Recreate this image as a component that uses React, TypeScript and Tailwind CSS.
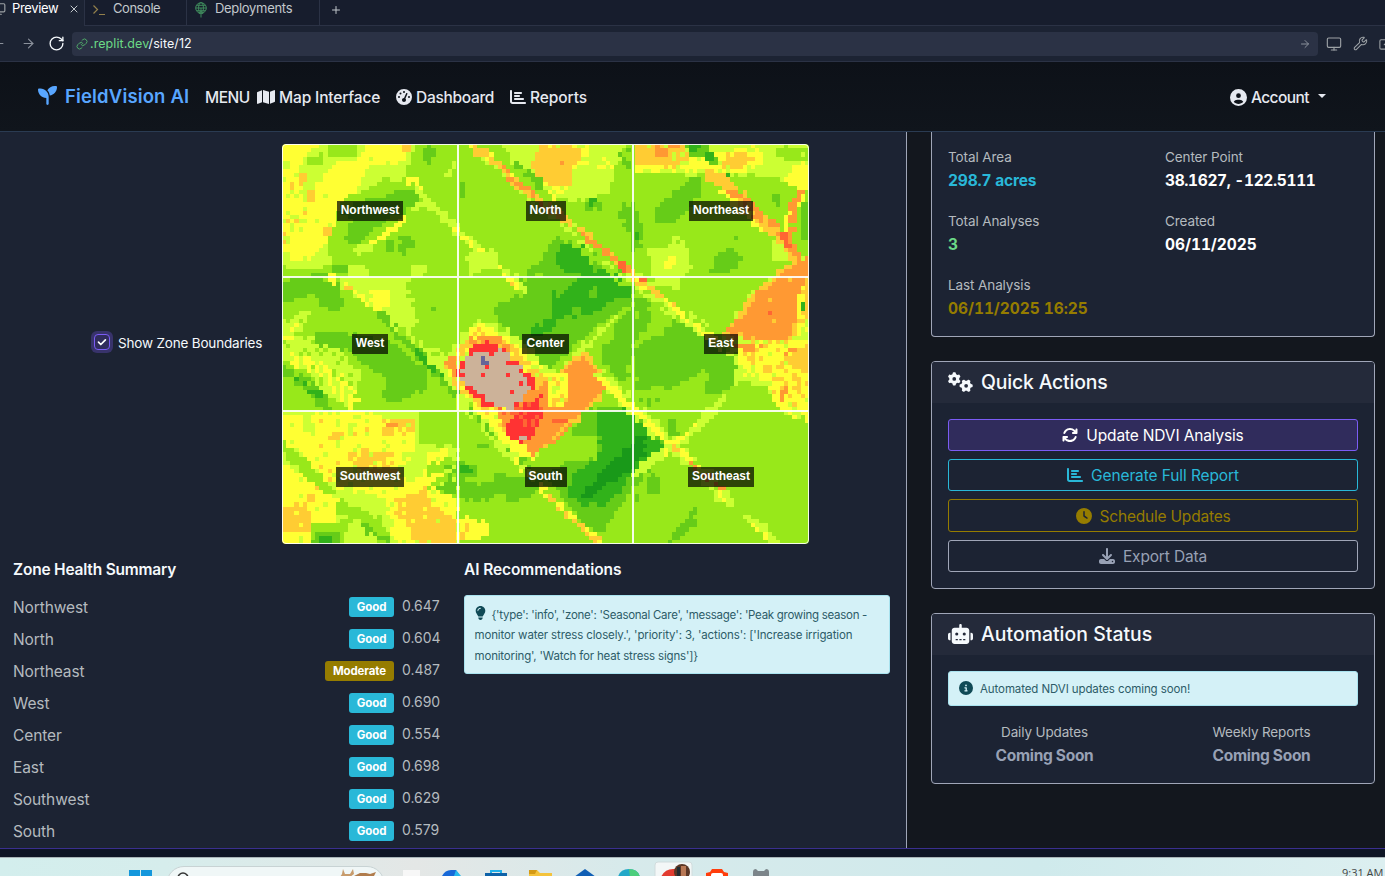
import React from 'react';
import {
  FaSeedling, FaMap, FaGaugeHigh, FaChartBar, FaCircleUser, FaGears, FaArrowsRotate,
  FaClock, FaDownload, FaRobot, FaCircleInfo, FaLightbulb,
} from 'react-icons/fa6';
import { X, Plus, ArrowLeft, ArrowRight, RotateCw, Monitor, Wrench, ExternalLink, Link } from 'lucide-react';

/* ---------- NDVI raster: shapes sampled onto a coarse grid ---------- */
const COLS = 127;
const ROWS = 96;
const W = 1581;
const H = 1200;
const PALETTE: Record<string, string> = {
  a: '#98e81a', b: '#66cc18', c: '#31b21a', d: '#199919', e: '#ccff33', f: '#ffff33',
  g: '#ffcc33', h: '#ff9933', i: '#ff6633', j: '#ff3333', k: '#ccb299', l: '#666699',
};

type Shape = { c: string; p: number[]; d?: number; w?: number; s?: number };

// p = flat x,y list; w = stroke width (polyline), d = fill density, s = speckle block size
const SHAPES: Shape[] = [
  // northwest
  { c: 'e', p: [0, 0, 400, 0, 370, 100, 300, 130, 240, 150, 200, 260, 145, 340, 140, 372, 0, 372] },
  { c: 'f', p: [0, 0, 130, 0, 75, 30, 40, 90, 60, 150, 80, 250, 110, 345, 0, 350], d: 0.9, s: 2 },
  { c: 'f', p: [265, 0, 380, 0, 370, 50, 265, 65, 235, 120, 205, 170, 170, 250, 110, 330, 30, 330, 20, 270, 100, 130, 160, 60, 222, 38], d: 0.97 },
  { c: 'e', p: [0, 100, 70, 120, 70, 250, 0, 330], d: 0.22 },
  { c: 'a', p: [135, 0, 222, 0, 222, 36, 135, 36] },
  { c: 'a', p: [70, 35, 122, 30, 120, 58, 72, 58] },
  { c: 'a', p: [180, 170, 235, 140, 320, 100, 385, 130, 340, 180, 240, 240, 180, 290, 150, 350, 130, 330] },
  { c: 'g', p: [0, 90, 120, 60, 110, 250, 0, 330], d: 0.08 },
  { c: 'g', p: [70, 135, 95, 135, 95, 172, 70, 172] },
  { c: 'g', p: [45, 82, 72, 82, 72, 108, 45, 108] },
  { c: 'g', p: [120, 247, 146, 247, 146, 273, 120, 273] },
  { c: 'g', p: [365, 0, 390, 0, 380, 22, 365, 22] },
  { c: 'b', p: [230, 170, 330, 150, 360, 135, 408, 138, 410, 165, 370, 205, 330, 220, 280, 260, 240, 292, 200, 308, 195, 270, 210, 230, 180, 210] },
  { c: 'b', p: [420, 10, 475, 10, 455, 35, 440, 60, 422, 50] },
  { c: 'b', p: [305, 285, 332, 285, 332, 322, 305, 322] },
  { c: 'b', p: [358, 272, 382, 272, 405, 305, 380, 318, 365, 335, 345, 325, 345, 308, 360, 300] },
  { c: 'b', p: [155, 360, 195, 360, 195, 385, 155, 385] },
  { c: 'b', p: [93, 383, 160, 383, 160, 396, 93, 396] },
  { c: 'f', p: [262, 305, 300, 275, 345, 245, 370, 215], w: 16 },
  { c: 'e', p: [232, 320, 265, 305], w: 26 },
  { c: 'f', p: [385, 108, 415, 125], w: 22 },
  { c: 'e', p: [395, 128, 430, 165, 395, 195], w: 14 },
  { c: 'e', p: [430, 165, 465, 195, 520, 250, 560, 290, 620, 335, 670, 390, 715, 425, 792, 500], w: 22 },
  { c: 'f', p: [520, 255, 580, 310, 620, 340, 670, 395, 710, 430], w: 13, d: 0.8 },
  { c: 'g', p: [650, 370, 700, 425], w: 13, d: 0.6 },
  { c: 'e', p: [485, 100, 505, 85, 520, 55], w: 16 },
  { c: 'e', p: [392, 365, 440, 365, 428, 396, 392, 396], d: 0.8 },
  { c: 'e', p: [205, 362, 250, 362, 262, 396, 205, 396] },
  { c: 'e', p: [555, 325, 640, 315, 645, 380, 610, 375, 555, 395] },
  { c: 'b', p: [532, 110, 545, 110, 545, 160, 532, 160] },
  { c: 'b', p: [735, 380, 792, 340, 792, 390, 735, 396] },
  // north
  { c: 'e', p: [660, 0, 1030, 0, 1010, 50, 990, 110, 985, 145, 880, 175, 800, 150, 750, 85, 690, 50] },
  { c: 'f', p: [792, 0, 930, 10, 910, 55, 875, 85, 865, 130, 815, 165, 790, 150, 750, 60], d: 0.8 },
  { c: 'g', p: [770, 10, 850, 0, 895, 22, 900, 45, 875, 55, 870, 120, 800, 125, 760, 85, 745, 60, 760, 30] },
  { c: 'f', p: [900, 60, 1000, 30, 1000, 80, 920, 70], d: 0.6 },
  { c: 'h', p: [832, 50, 846, 50, 846, 63, 832, 63] },
  { c: 'b', p: [1010, 0, 1040, 0, 1046, 90, 1025, 90, 1020, 30], d: 0.75 },
  { c: 'b', p: [690, 55, 780, 120], w: 24, d: 0.6 },
  { c: 'c', p: [920, 165, 945, 165, 945, 185, 920, 185] },
  { c: 'b', p: [900, 180, 960, 175, 960, 200, 930, 205, 910, 195], d: 0.6 },
  { c: 'b', p: [1020, 180, 1050, 180, 1085, 240, 1080, 300, 1050, 330, 1030, 230, 1005, 220] },
  { c: 'c', p: [1060, 265, 1072, 265, 1072, 290, 1060, 290] },
  // central green fields
  { c: 'b', p: [792, 310, 830, 270, 880, 280, 930, 320, 1000, 370, 1055, 405, 1055, 470, 1000, 510, 960, 540, 890, 590, 850, 640, 792, 680, 720, 610, 640, 510, 650, 480, 705, 455, 735, 470, 720, 410, 792, 395] },
  { c: 'c', p: [820, 330, 845, 293, 900, 300, 910, 345, 940, 380, 975, 370, 1045, 400, 1050, 450, 980, 480, 930, 512, 830, 520, 800, 565, 750, 575, 745, 555, 792, 530, 815, 500, 805, 450, 870, 420, 895, 395, 860, 390, 825, 360] },
  { c: 'b', p: [815, 440, 845, 420, 840, 455, 818, 465] },
  { c: 'b', p: [870, 490, 895, 490, 890, 515, 870, 515] },
  { c: 'b', p: [920, 435, 940, 430, 940, 460, 920, 455] },
  { c: 'b', p: [1000, 540, 1060, 480, 1060, 600, 985, 600] },
  { c: 'b', p: [960, 600, 1050, 600, 1050, 640, 1030, 720, 990, 690, 960, 650] },
  { c: 'e', p: [920, 600, 960, 560, 1000, 520], w: 16, d: 0.8 },
  { c: 'e', p: [860, 660, 920, 595], w: 22, d: 0.8 },
  // highway through the north zone
  { c: 'a', p: [800, 225, 880, 280, 960, 345, 1040, 400], w: 50, d: 0.8 },
  { c: 'e', p: [560, 0, 640, 65, 710, 130, 790, 195, 850, 240, 900, 280, 960, 330, 1010, 370, 1060, 405], w: 36, d: 0.45 },
  { c: 'f', p: [575, 0, 640, 55, 710, 120, 790, 185, 850, 228], w: 28, d: 0.5 },
  { c: 'g', p: [585, 15, 640, 55, 710, 120, 790, 180, 850, 225, 900, 265, 960, 315, 1010, 355, 1060, 400], w: 23, d: 0.85 },
  { c: 'h', p: [620, 45, 660, 75, 710, 120, 790, 175], w: 14, d: 0.5 },
  { c: 'h', p: [900, 265, 960, 315, 1010, 355, 1060, 395], w: 20, d: 0.75 },
  { c: 'i', p: [1005, 350, 1020, 345, 1045, 385, 1050, 395, 1030, 390, 1010, 370] },
  // northeast
  { c: 'e', p: [1055, 0, 1581, 0, 1581, 110, 1510, 110, 1450, 95, 1060, 88] },
  { c: 'f', p: [1060, 55, 1200, 60, 1215, 30, 1440, 5, 1440, 60, 1380, 85, 1290, 80, 1060, 85], d: 0.8 },
  { c: 'g', p: [1060, 0, 1205, 0, 1215, 50, 1180, 70, 1120, 65, 1060, 65], d: 0.95 },
  { c: 'h', p: [1120, 2, 1190, 2, 1190, 12, 1158, 12, 1158, 38, 1120, 38] },
  { c: 'b', p: [1208, 0, 1290, 0, 1290, 30, 1310, 60, 1280, 60, 1250, 30, 1215, 40] },
  { c: 'c', p: [1220, 0, 1260, 0, 1245, 28, 1225, 28] },
  { c: 'c', p: [1270, 28, 1300, 28, 1300, 52, 1275, 52] },
  { c: 'g', p: [1320, 42, 1345, 30, 1420, 30, 1405, 55, 1370, 75, 1325, 70] },
  { c: 'a', p: [1480, 10, 1581, 10, 1581, 50, 1535, 55, 1480, 40], d: 0.85 },
  { c: 'f', p: [1540, 60, 1581, 60, 1581, 140, 1545, 130, 1510, 110] },
  { c: 'b', p: [1160, 160, 1215, 110, 1240, 90, 1260, 115, 1260, 150, 1210, 205, 1170, 235, 1120, 240, 1120, 185] },
  { c: 'c', p: [1333, 88, 1346, 88, 1346, 112, 1333, 112] },
  { c: 'f', p: [1270, 80, 1310, 110, 1345, 150, 1400, 210, 1500, 280, 1540, 330], w: 38, d: 0.8 },
  { c: 'g', p: [1290, 95, 1345, 130, 1400, 190, 1450, 235, 1510, 290, 1550, 370], w: 34 },
  { c: 'h', p: [1350, 145, 1390, 170, 1420, 205, 1480, 250, 1520, 290, 1560, 350], w: 24, d: 0.9 },
  { c: 'i', p: [1500, 270, 1520, 300], w: 20 },
  { c: 'f', p: [1570, 120, 1535, 190, 1520, 250], w: 32, d: 0.7 },
  { c: 'h', p: [1560, 140, 1535, 180, 1528, 290], w: 19 },
  { c: 'b', p: [1555, 180, 1581, 175, 1581, 290, 1555, 280, 1565, 230] },
  { c: 'e', p: [1465, 290, 1505, 300, 1520, 350, 1475, 355] },
  { c: 'b', p: [1470, 155, 1498, 155, 1498, 190, 1480, 190] },
  { c: 'e', p: [1095, 310, 1220, 305, 1232, 370, 1195, 400, 1190, 440, 1140, 430, 1105, 380] },
  { c: 'f', p: [1140, 335, 1190, 330, 1170, 370, 1140, 370], d: 0.7 },
  { c: 'e', p: [1165, 280, 1210, 280, 1210, 310, 1170, 305], d: 0.5 },
  { c: 'b', p: [1285, 345, 1310, 325, 1350, 318, 1382, 345, 1350, 385, 1290, 385] },
  { c: 'b', p: [1365, 265, 1372, 265, 1372, 290, 1362, 290] },
  // east orchard
  { c: 'e', p: [1581, 330, 1460, 400, 1410, 450, 1320, 570, 1340, 600, 1581, 600] },
  { c: 'g', p: [1581, 340, 1500, 370, 1465, 400, 1420, 450, 1380, 495, 1345, 535, 1325, 565, 1340, 600, 1530, 600, 1581, 520] },
  { c: 'h', p: [1581, 338, 1520, 368, 1480, 405, 1425, 450, 1385, 500, 1350, 545, 1330, 565, 1350, 580, 1500, 590, 1535, 550, 1545, 450, 1581, 400], d: 0.98 },
  { c: 'f', p: [1545, 430, 1575, 430, 1560, 530, 1581, 560, 1540, 570], d: 0.6 },
  { c: 'i', p: [1458, 505, 1470, 505, 1470, 517, 1458, 517] },
  { c: 'c', p: [1557, 480, 1570, 480, 1570, 495, 1557, 495] },
  { c: 'b', p: [1060, 460, 1090, 455, 1108, 500, 1105, 550, 1060, 590] },
  { c: 'b', p: [1125, 580, 1175, 535, 1230, 545, 1300, 595, 1345, 630, 1390, 680, 1380, 700, 1340, 735, 1290, 760, 1265, 735, 1200, 735, 1170, 728, 1120, 728, 1060, 750, 1060, 620, 1090, 590] },
  { c: 'a', p: [1190, 720, 1230, 700, 1270, 680, 1290, 685, 1270, 735, 1190, 740] },
  { c: 'e', p: [1060, 400, 1100, 440, 1150, 480, 1240, 540, 1310, 590, 1370, 630], w: 44, d: 0.55 },
  { c: 'f', p: [1060, 405, 1110, 440, 1180, 490, 1250, 550, 1300, 590], w: 20, d: 0.75 },
  { c: 'g', p: [1060, 400, 1110, 435, 1170, 480], w: 15, d: 0.8 },
  { c: 'i', p: [1072, 402, 1092, 402, 1092, 416, 1072, 416] },
  { c: 'e', p: [1360, 585, 1581, 585, 1581, 820, 1500, 810, 1460, 750, 1400, 710, 1360, 730] },
  { c: 'a', p: [1370, 735, 1450, 725, 1500, 800, 1500, 820, 1350, 800] },
  { c: 'f', p: [1370, 600, 1581, 590, 1581, 835, 1530, 820, 1470, 770, 1460, 715, 1390, 690, 1370, 640], d: 0.9 },
  { c: 'g', p: [1360, 588, 1581, 588, 1581, 760, 1540, 780, 1470, 770, 1460, 700, 1400, 660], d: 0.3 },
  { c: 'g', p: [1510, 645, 1581, 600, 1581, 690, 1530, 675] },
  { c: 'h', p: [1350, 600, 1440, 600, 1430, 640, 1410, 635], d: 0.5 },
  { c: 'h', p: [1495, 635, 1550, 600, 1545, 625], d: 0.8 },
  { c: 'h', p: [1468, 720, 1510, 720, 1540, 780, 1500, 770], d: 0.4 },
  // west
  { c: 'b', p: [0, 405, 165, 405, 180, 440, 180, 490, 150, 500, 120, 480, 95, 455, 75, 450, 40, 472, 10, 470, 0, 465] },
  { c: 'e', p: [200, 400, 380, 400, 375, 450, 405, 500, 400, 550, 330, 560, 300, 500, 240, 465, 150, 405] },
  { c: 'f', p: [150, 400, 200, 430, 250, 470, 300, 500], w: 22, d: 0.8 },
  { c: 'f', p: [265, 440, 320, 438, 320, 485, 285, 500] },
  { c: 'g', p: [190, 425, 207, 425, 207, 440, 190, 440] },
  { c: 'e', p: [0, 530, 60, 500, 90, 500, 50, 570, 150, 600, 240, 690, 210, 790, 130, 760, 90, 690, 0, 640], d: 0.85 },
  { c: 'f', p: [0, 550, 40, 530, 50, 570, 30, 600, 0, 610], d: 0.6 },
  { c: 'f', p: [10, 640, 60, 620, 120, 660, 180, 690, 230, 750, 220, 800, 180, 780, 130, 700, 40, 670], d: 0.5 },
  { c: 'b', p: [95, 565, 190, 562, 300, 590, 350, 608, 410, 655, 445, 695, 440, 740, 400, 748, 380, 765, 320, 780, 305, 760, 310, 710, 290, 690, 250, 668, 215, 635, 190, 622, 100, 600] },
  { c: 'a', p: [0, 690, 50, 690, 80, 790, 0, 790] },
  { c: 'b', p: [0, 680, 50, 705, 100, 740, 130, 790], w: 34, d: 0.85 },
  { c: 'c', p: [55, 715, 115, 755], w: 18, d: 0.8 },
  { c: 'e', p: [340, 540, 400, 600, 450, 640, 500, 690, 540, 740], w: 34, d: 0.55 },
  { c: 'e', p: [400, 630, 430, 610, 520, 640, 520, 760, 470, 690], d: 0.5 },
  { c: 'b', p: [285, 500, 330, 550, 390, 610, 440, 660, 490, 715, 540, 765, 610, 830, 660, 880, 740, 960], w: 22, d: 0.85 },
  { c: 'c', p: [400, 620, 470, 690], w: 16, d: 0.4 },
  { c: 'b', p: [445, 487, 455, 487, 455, 500, 445, 500] },
  // processing yard
  { c: 'e', p: [470, 660, 540, 570, 600, 530, 680, 560, 840, 700, 860, 770, 830, 830, 760, 945, 690, 940, 620, 850, 530, 770, 480, 700], d: 0.85 },
  { c: 'f', p: [480, 660, 535, 620, 560, 560, 600, 538, 680, 580, 760, 650, 830, 700, 850, 760, 820, 800, 750, 945, 690, 920, 610, 830, 530, 740], d: 0.85 },
  { c: 'g', p: [490, 660, 540, 600, 580, 560, 650, 565, 700, 610, 760, 680, 830, 730, 850, 780, 740, 900, 690, 880, 600, 790, 530, 740], d: 0.7 },
  { c: 'h', p: [485, 655, 520, 630, 520, 700], d: 0.8 },
  { c: 'h', p: [560, 570, 650, 575, 700, 620, 560, 615], d: 0.5 },
  { c: 'j', p: [530, 665, 565, 618, 590, 592, 650, 594, 685, 640, 725, 680, 760, 710, 738, 765, 700, 803, 600, 782, 560, 748, 530, 700] },
  { c: 'k', p: [560, 628, 605, 622, 625, 632, 650, 622, 682, 628, 692, 652, 720, 680, 722, 702, 748, 722, 738, 748, 705, 775, 692, 795, 655, 799, 618, 772, 602, 748, 570, 736, 543, 710, 534, 682, 545, 655] },
  { c: 'j', p: [595, 690, 608, 690, 608, 702, 595, 702] },
  { c: 'j', p: [605, 665, 618, 665, 618, 677, 605, 677] },
  { c: 'j', p: [668, 690, 680, 690, 680, 702, 668, 702] },
  { c: 'j', p: [706, 715, 720, 715, 720, 727, 706, 727] },
  { c: 'j', p: [668, 650, 702, 650, 702, 664, 668, 664] },
  { c: 'j', p: [681, 740, 695, 740, 695, 752, 681, 752] },
  { c: 'h', p: [740, 740, 800, 720, 870, 780, 870, 850, 800, 910, 750, 930, 720, 880, 680, 850, 620, 810, 700, 790] },
  { c: 'j', p: [730, 775, 792, 745, 780, 810, 765, 850, 735, 895, 700, 890, 680, 870, 672, 840, 710, 810] },
  { c: 'i', p: [640, 795, 800, 780, 780, 830, 740, 850, 700, 830], d: 0.35 },
  { c: 'k', p: [706, 870, 730, 870, 730, 890, 706, 890] },
  { c: 'i', p: [792, 740, 808, 740, 808, 780, 792, 780] },
  { c: 'l', p: [592, 640, 604, 640, 604, 664, 592, 664] },
  { c: 'l', p: [604, 652, 617, 652, 617, 664, 604, 664] },
  { c: 'g', p: [830, 690, 890, 630, 910, 620, 975, 700, 965, 750, 900, 820, 830, 870, 790, 915, 790, 700] },
  { c: 'h', p: [800, 715, 850, 690, 870, 655, 905, 640, 950, 685, 968, 730, 930, 770, 900, 805, 850, 840, 810, 885, 780, 910, 780, 720] },
  { c: 'g', p: [795, 690, 855, 690, 855, 780, 800, 785] },
  { c: 'f', p: [795, 690, 860, 690, 855, 780, 800, 785], d: 0.65 },
  { c: 'e', p: [800, 695, 850, 700, 845, 770, 810, 775], d: 0.2 },
  { c: 'i', p: [820, 820, 855, 820, 855, 842, 810, 842] },
  // south
  { c: 'b', p: [900, 800, 960, 785, 1060, 795, 1170, 905, 1100, 980, 1060, 1020, 1000, 1110, 960, 1155, 910, 1150, 860, 1080, 800, 1010, 830, 955, 950, 945, 870, 870] },
  { c: 'c', p: [945, 798, 1030, 795, 1080, 840, 1120, 870, 1155, 910, 1120, 940, 1060, 980, 1010, 1050, 960, 1085, 890, 1080, 865, 1050, 880, 980, 930, 960, 955, 925] },
  { c: 'd', p: [1055, 900, 1090, 860, 1090, 930, 1050, 980, 1000, 1010, 950, 1030, 940, 1065, 890, 1065, 900, 1040, 940, 1005, 990, 945] },
  { c: 'a', p: [860, 870, 940, 870, 950, 925, 850, 940] },
  { c: 'e', p: [960, 700, 1050, 790, 1110, 850, 1170, 905, 1240, 960, 1310, 1040], w: 40, d: 0.7 },
  { c: 'f', p: [960, 700, 1030, 770, 1100, 840, 1170, 900, 1240, 965], w: 17, d: 0.85 },
  { c: 'e', p: [1060, 990, 1110, 950, 1200, 890, 1260, 830, 1320, 770], w: 26 },
  { c: 'f', p: [1150, 930, 1210, 870, 1260, 830], w: 13, d: 0.6 },
  { c: 'g', p: [1168, 895, 1195, 895, 1195, 925, 1168, 925], d: 0.8 },
  { c: 'h', p: [1225, 960, 1320, 1035], w: 15, d: 0.7 },
  { c: 'e', p: [1295, 1035, 1340, 1040, 1365, 1085, 1290, 1075] },
  { c: 'f', p: [1305, 1036, 1325, 1070], w: 13 },
  { c: 'e', p: [1395, 1125, 1440, 1150, 1480, 1195], w: 24 },
  { c: 'f', p: [1405, 1140, 1460, 1185], w: 12, d: 0.7 },
  { c: 'b', p: [1155, 1195, 1180, 1155, 1215, 1125, 1220, 1095, 1242, 1095, 1240, 1140, 1200, 1180, 1170, 1197] },
  { c: 'b', p: [1160, 830, 1182, 830, 1190, 870, 1155, 880] },
  { c: 'b', p: [1060, 1000, 1130, 990, 1130, 1110, 1060, 1110], d: 0.22, s: 2 },
  { c: 'b', p: [1070, 765, 1130, 765, 1110, 790], d: 0.6 },
  { c: 'f', p: [700, 950, 792, 1045, 840, 1095, 890, 1140, 960, 1195], w: 20, d: 0.85 },
  { c: 'g', p: [792, 1050, 840, 1100, 890, 1145, 960, 1195], w: 12, d: 0.7 },
  { c: 'e', p: [530, 780, 600, 850, 660, 920, 740, 985], w: 14, d: 0.7 },
  { c: 'b', p: [530, 1030, 570, 1015, 625, 1015, 640, 995, 780, 1005, 765, 1045, 700, 1070, 680, 1085, 665, 1045, 625, 1070, 560, 1068, 530, 1055] },
  { c: 'b', p: [575, 895, 630, 895, 625, 915, 590, 915] },
  // southwest
  { c: 'e', p: [0, 800, 410, 800, 415, 900, 530, 910, 530, 1200, 0, 1200] },
  { c: 'f', p: [0, 820, 60, 810, 60, 850, 150, 880, 120, 920, 160, 1000, 200, 1050, 120, 1000, 50, 920, 0, 890], d: 0.95 },
  { c: 'f', p: [90, 805, 260, 800, 400, 860, 400, 920, 340, 1000, 300, 1060, 220, 1040, 130, 970, 130, 880, 80, 830], d: 0.86 },
  { c: 'f', p: [440, 930, 500, 920, 480, 1000, 440, 1040, 410, 1010], d: 0.85 },
  { c: 'f', p: [0, 960, 120, 1030, 200, 1080, 160, 1130, 90, 1195, 0, 1195], d: 0.96 },
  { c: 'f', p: [300, 1010, 450, 1000, 525, 1070, 525, 1195, 340, 1195], d: 0.97 },
  { c: 'a', p: [0, 905, 60, 960, 120, 1020, 140, 1040], w: 32, d: 0.97 },
  { c: 'a', p: [180, 1090, 230, 1110, 280, 1140, 310, 1185], w: 38, d: 0.97 },
  { c: 'a', p: [410, 800, 525, 800, 525, 840, 460, 880, 420, 880] },
  { c: 'a', p: [440, 960, 530, 930, 530, 1060, 440, 1040], d: 0.7 },
  { c: 'a', p: [90, 1135, 210, 1130, 180, 1195, 90, 1195] },
  { c: 'g', p: [330, 1070, 400, 1045, 430, 1030, 450, 1080, 520, 1120, 525, 1195, 400, 1195, 380, 1140, 345, 1110], d: 0.95 },
  { c: 'g', p: [0, 1090, 50, 1078, 88, 1095, 85, 1160, 0, 1165], d: 0.92 },
  { c: 'g', p: [200, 905, 230, 920, 330, 925, 350, 985, 290, 1000, 210, 965], d: 0.8 },
  { c: 'g', p: [300, 830, 400, 830, 390, 870, 300, 870], d: 0.75 },
  { c: 'g', p: [80, 1045, 105, 1045, 105, 1070, 80, 1070] },
  { c: 'g', p: [150, 860, 175, 860, 175, 890, 150, 890] },
  { c: 'g', p: [100, 820, 280, 830, 220, 920, 80, 1080], d: 0.07 },
  { c: 'h', p: [315, 840, 345, 840, 345, 850, 315, 850] },
  { c: 'b', p: [100, 1165, 165, 1160, 180, 1195, 90, 1195] },
  { c: 'c', p: [110, 1178, 145, 1178, 145, 1197, 110, 1197] },
  { c: 'b', p: [240, 1135, 320, 1180, 320, 1195, 250, 1170], d: 0.8 },
  { c: 'b', p: [490, 965, 575, 950, 580, 990, 545, 1010, 520, 1050, 460, 1030, 500, 1000], d: 0.9 },
  { c: 'c', p: [530, 965, 565, 968, 570, 990, 530, 990] },
  { c: 'f', p: [530, 1120, 570, 1125, 625, 1130, 620, 1165, 580, 1195, 530, 1195] },
  { c: 'g', p: [530, 1125, 600, 1140, 560, 1190, 530, 1190], d: 0.3 },
];

function hash(x: number, y: number, k: number) {
  let n = (x * 374761393 + y * 668265263 + k * 2147483647) | 0;
  n = Math.imul(n ^ (n >>> 13), 1274126177);
  n ^= n >>> 16;
  return (n >>> 0) / 4294967296;
}

function inPolygon(x: number, y: number, p: number[]) {
  let inside = false;
  for (let i = 0, j = p.length - 2; i < p.length; j = i, i += 2) {
    if (p[i + 1] > y !== p[j + 1] > y && x < ((p[j] - p[i]) * (y - p[i + 1])) / (p[j + 1] - p[i + 1]) + p[i]) {
      inside = !inside;
    }
  }
  return inside;
}

function nearLine(x: number, y: number, p: number[], w: number) {
  for (let i = 0; i + 3 < p.length; i += 2) {
    const dx = p[i + 2] - p[i];
    const dy = p[i + 3] - p[i + 1];
    const t = Math.max(0, Math.min(1, ((x - p[i]) * dx + (y - p[i + 1]) * dy) / (dx * dx + dy * dy)));
    if (Math.hypot(x - p[i] - t * dx, y - p[i + 1] - t * dy) <= w / 2) return true;
  }
  return false;
}

function buildLayers() {
  const paths: Record<string, string> = {};
  for (let r = 0; r < ROWS; r++) {
    let start = 0;
    let prev = '';
    for (let c = 0; c <= COLS; c++) {
      let color = '';
      if (c < COLS) {
        color = 'a';
        const cx = ((c + 0.5) * W) / COLS;
        const cy = ((r + 0.5) * H) / ROWS;
        const jx = cx + (hash(c, r, 1) - 0.5) * 11;
        const jy = cy + (hash(c, r, 2) - 0.5) * 11;
        SHAPES.forEach((s, k) => {
          const hit = s.w ? nearLine(jx, jy, s.p, s.w) : inPolygon(s.p.length > 8 ? jx : cx, s.p.length > 8 ? jy : cy, s.p);
          const b = s.s ?? 1;
          if (hit && (s.d === undefined || hash(Math.floor(c / b), Math.floor(r / b), k + 7) < s.d)) color = s.c;
        });
      }
      if (color !== prev) {
        if (prev) paths[prev] = (paths[prev] ?? '') + `M${start} ${r}H${c}V${r + 1}H${start}Z`;
        start = c;
        prev = color;
      }
    }
  }
  return paths;
}

const LAYERS = buildLayers();
const ZONES = ['Northwest', 'North', 'Northeast', 'West', 'Center', 'East', 'Southwest', 'South', 'Southeast'];

function FieldMap() {
  return (
    <div className="relative h-[400px] w-[527px] shrink-0 overflow-hidden rounded-[4px]">
      <svg className="block h-full w-full" viewBox={`0 0 ${COLS} ${ROWS}`} preserveAspectRatio="none" shapeRendering="crispEdges">
        {Object.entries(LAYERS).map(([k, d]) => <path key={k} d={d} fill={PALETTE[k]} />)}
      </svg>
      <div className="absolute inset-0 grid grid-cols-[176px_175px_1fr] grid-rows-[133px_134px_1fr] rounded-[4px] border border-white/90">
        {ZONES.map((z, i) => (
          <div
            key={z}
            className={
              'flex items-center justify-center border-white/90 ' +
              (i % 3 < 2 ? 'border-r-2 ' : '') + (i < 6 ? 'border-b-2 ' : '') + (i < 3 ? 'pt-[2px]' : '')
            }
          >
            <span className="mb-px bg-black/70 px-[4px] pb-px font-['Liberation_Sans',sans-serif] text-[12px] leading-[19px] font-bold text-white">{z}</span>
          </div>
        ))}
      </div>
    </div>
  );
}

/* ---------- browser chrome ---------- */
function BrowserBar() {
  return (
    <>
      <div className="flex h-[26px] shrink-0 bg-[#171d2d] text-[13px] text-[#c2c8cc]">
        <div className="flex h-[26px] w-[84px] shrink-0 items-start bg-[#1c2333] text-white">
          <Monitor className="mt-[2px] -ml-[8px] h-[14px] w-[14px] text-[#9da2a6]" strokeWidth={2} />
          <span className="ml-[6px] w-[46px] text-[13px] leading-[17px] tracking-[-0.35px]">Preview</span>
          <X className="mt-[3px] ml-[10px] h-[12px] w-[12px] text-[#c2c8cc]" strokeWidth={2} />
        </div>
        <div className="flex h-[26px] w-[103px] shrink-0 border-r border-b border-l border-[#2b3245]">
          <svg className="mt-[3px] ml-[7px] h-[13px] w-[14px]" viewBox="0 0 14 13" fill="none" stroke="#93804c" strokeWidth="1.2">
            <path d="M1.5 2.5l4 4-4 4M7 11.5h6" />
          </svg>
          <span className="ml-[7px] leading-[17px] tracking-[-0.45px]">Console</span>
        </div>
        <div className="flex h-[26px] w-[133px] shrink-0 border-r border-b border-[#2b3245]">
          <svg className="mt-[2px] ml-[7px] h-[16px] w-[14px]" viewBox="0 0 14 16" fill="none" stroke="#3f8a5c" strokeWidth="1">
            <circle cx="7" cy="6" r="5.3" />
            <ellipse cx="7" cy="6" rx="2.4" ry="5.3" />
            <path d="M1.7 6h10.6M2.6 3.3h8.8M2.6 8.7h8.8M7 6v9.5M5 12l2-3 2 3" />
          </svg>
          <span className="ml-[7px] leading-[17px] tracking-[-0.3px]">Deployments</span>
        </div>
        <div className="flex h-[26px] flex-1 border-b border-[#2b3245]">
          <Plus className="mt-[4px] ml-[10px] h-[12px] w-[12px] text-[#c2c8cc]" strokeWidth={2} />
        </div>
      </div>
      <div className="flex h-[36px] shrink-0 items-center overflow-hidden border-b border-[#2b3245] bg-[#1c2333]">
        <ArrowLeft className="-ml-[9px] h-[15px] w-[15px] shrink-0 text-[#8b919c]" strokeWidth={1.8} />
        <ArrowRight className="ml-[15px] h-[15px] w-[15px] shrink-0 text-[#8b919c]" strokeWidth={1.8} />
        <RotateCw className="ml-[12px] h-[17px] w-[17px] shrink-0 text-[#f5f9fc]" strokeWidth={1.9} />
        <div className="ml-[7px] flex h-[24px] w-[1246px] shrink-0 items-center rounded-[4px] bg-[#2b3245]">
          <Link className="ml-[4px] h-[12px] w-[12px] text-[#4fa869]" strokeWidth={2} />
          <span className="mt-px ml-[2px] text-[12.5px] tracking-[0.07px] text-[#6bd986]">.replit.dev<span className="text-[#f5f9fc]">/site/12</span></span>
          <ArrowRight className="mr-[7px] ml-auto h-[12px] w-[12px] text-[#8b919c]" strokeWidth={2} />
        </div>
        <Monitor className="ml-[8px] h-[16px] w-[16px] shrink-0 text-[#9da2a6]" strokeWidth={1.7} />
        <Wrench className="ml-[11px] h-[15px] w-[15px] shrink-0 text-[#9da2a6]" strokeWidth={1.7} />
        <ExternalLink className="ml-[10px] h-[15px] w-[15px] shrink-0 text-[#9da2a6]" strokeWidth={1.7} />
      </div>
    </>
  );
}

function NavBar() {
  return (
    <nav className="flex h-[70px] shrink-0 items-center border-b border-[#2a3b52] bg-[linear-gradient(#0d1118,#10151c)] pt-[2px] pl-[38px] text-[15.5px] font-medium text-[#e6e9f0]">
      <FaSeedling className="mb-[5px] h-[19px] w-[19px] text-[#58a6ff]" />
      <span className="mb-[3px] ml-[8px] w-[124px] text-[18.5px] leading-none font-semibold tracking-[0.15px] whitespace-nowrap text-[#58a6ff]">FieldVision AI</span>
      <span className="ml-[16px] w-[45px] tracking-[-0.5px]">MENU</span>
      <FaMap className="mb-px ml-[7px] h-[16px] w-[18px]" />
      <span className="ml-[4px] w-[101px] tracking-[-0.15px] whitespace-nowrap">Map Interface</span>
      <FaGaugeHigh className="mb-px ml-[16px] h-[16px] w-[16px]" />
      <span className="ml-[4px] w-[78px] tracking-[-0.3px]">Dashboard</span>
      <FaChartBar className="mb-px ml-[16px] h-[16px] w-[16px]" />
      <span className="ml-[4px] w-[57px] tracking-[-0.1px]">Reports</span>
      <FaCircleUser className="mb-px ml-auto h-[17px] w-[17px]" />
      <span className="ml-[4px] w-[59px] tracking-[-0.6px]">Account</span>
      <svg className="mr-[59px] mb-[3px] ml-[8px] h-[4px] w-[8px]" viewBox="0 0 8 4"><path d="M0 0h8L4 4z" fill="#e6e9f0" /></svg>
    </nav>
  );
}

const HEALTH: [string, string, string][] = [
  ['Northwest', 'Good', '0.647'], ['North', 'Good', '0.604'], ['Northeast', 'Moderate', '0.487'],
  ['West', 'Good', '0.690'], ['Center', 'Good', '0.554'], ['East', 'Good', '0.698'],
  ['Southwest', 'Good', '0.629'], ['South', 'Good', '0.579'],
];

function MainPanel() {
  return (
    <section className="h-full w-[907px] shrink-0 overflow-hidden border-r border-[#a0a6b8] bg-[#1c2333]">
      <div className="mt-[12px] flex items-center pl-[91px]">
        <span className="mb-[4px] flex h-[22px] w-[22px] shrink-0 items-center justify-center rounded-[6px] bg-[#38336b]">
          <span className="flex h-[16px] w-[16px] items-center justify-center rounded-[4px] border border-[#7b5cf5] bg-[#302c5c]">
            <svg className="h-[10px] w-[10px]" viewBox="0 0 10 10" fill="none" stroke="#fff" strokeWidth="1.7" strokeLinecap="round" strokeLinejoin="round"><path d="M1.5 5.2l2.3 2.3 4.6-4.7" /></svg>
          </span>
        </span>
        <span className="mb-[2px] ml-[5px] w-[164px] text-[13.5px] tracking-[-0.18px] whitespace-nowrap text-[#f5f9fc]">Show Zone Boundaries</span>
        <FieldMap />
      </div>
      <div className="flex pl-[13px]">
        <div className="w-[427px] pt-[16px]">
          <h6 className="text-[15.5px] leading-[19px] font-semibold tracking-[-0.2px] text-[#f5f9fc]">Zone Health Summary</h6>
          <div className="mt-[12px]">
            {HEALTH.map(([name, level, v]) => (
              <div key={name} className="flex h-[32px] items-center text-[15.5px] tracking-[-0.1px] text-[#b4babf]">
                <span className="mt-[2px]">{name}</span>
                <span
                  className={
                    'ml-auto flex h-[20px] items-center justify-center rounded-[3px] pt-px text-[11.5px] font-bold text-white ' +
                    (level === 'Good' ? 'w-[45px] bg-[#29b8d8]' : 'w-[69px] bg-[#957c00]')
                  }
                >
                  {level}
                </span>
                <span className="mb-[3px] ml-[8px] w-[38px] text-[14px] tracking-[-0.05px]">{v}</span>
              </div>
            ))}
          </div>
        </div>
        <div className="ml-[24px] w-[426px] pt-[16px]">
          <h6 className="text-[15.5px] leading-[19px] font-semibold tracking-[-0.1px] text-[#f5f9fc]">AI Recommendations</h6>
          <div className="mt-[16px] h-[79px] rounded-[3px] border border-[#a9e3ef] bg-[#d4f1f7] py-[9px] pl-[9.5px] text-[11.5px] leading-[20.4px] whitespace-nowrap text-[#2d5c68]">
            <div className="tracking-[-0.28px]">
              <FaLightbulb className="mr-[6px] inline h-[14px] w-[11px] align-[-1px] text-[#104a56]" />
              {"{'type': 'info', 'zone': 'Seasonal Care', 'message': 'Peak growing season -"}
            </div>
            <div className="tracking-[-0.13px]">{"monitor water stress closely.', 'priority': 3, 'actions': ['Increase irrigation"}</div>
            <div className="tracking-[-0.17px]">{"monitoring', 'Watch for heat stress signs']}"}</div>
          </div>
        </div>
      </div>
    </section>
  );
}

function Stat({ label, value, color }: { label: string; value: string; color: string }) {
  return (
    <div className="h-[64px]">
      <div className="text-[13.5px] leading-[20px] tracking-[-0.1px] text-[#b4babf]">{label}</div>
      <div className={'mt-[2px] text-[15.5px] leading-[24px] font-bold tabular-nums ' + color}>{value}</div>
    </div>
  );
}

function Action({ icon, label, style }: { icon: React.ReactNode; label: string; style: string }) {
  return (
    <button className={'flex items-center justify-center gap-[8px] rounded-[3px] border text-[15.5px] ' + style}>
      {icon}
      <span className="mt-[2px]">{label}</span>
    </button>
  );
}

function CardHeader({ icon, title, spacing }: { icon: React.ReactNode; title: string; spacing: string }) {
  return (
    <div className="flex h-[41px] items-center rounded-t-[3px] bg-[#242a3a] pl-[16px] text-[#f5f9fc]">
      <span className="mb-[2px]">{icon}</span>
      <h5 className={'ml-[8px] text-[19.4px] font-medium ' + spacing}>{title}</h5>
    </div>
  );
}

function SidePanels() {
  return (
    <aside className="ml-[24px] w-[444px]">
      <div className="h-[205px] rounded-b-[4px] border-x border-b border-[#a0a6b8] bg-[#1c2333] px-[16px] pt-[15px]">
        <div className="grid grid-cols-[217px_1fr]">
          <Stat label="Total Area" value="298.7 acres" color="text-[#29b8d8] tracking-[-0.2px]" />
          <Stat label="Center Point" value="38.1627, -122.5111" color="text-white tracking-[-0.36px]" />
          <Stat label="Total Analyses" value="3" color="text-[#6bd986]" />
          <Stat label="Created" value="06/11/2025" color="text-white tracking-[-0.05px]" />
          <Stat label="Last Analysis" value="06/11/2025 16:25" color="text-[#957c00] tracking-[-0.05px]" />
        </div>
      </div>
      <div className="mt-[24px] h-[228px] rounded-[4px] border border-[#a0a6b8] bg-[#1c2333]">
        <CardHeader icon={<FaGears className="h-[20px] w-[25px]" />} title="Quick Actions" spacing="tracking-[-0.17px]" />
        <div className="flex flex-col gap-[8px] px-[16px] pt-[16px]">
          <Action icon={<FaArrowsRotate className="h-[16px] w-[16px]" />} label="Update NDVI Analysis" style="h-[32px] border-[#7b5cf5] bg-[#302c5c] text-white tracking-[-0.15px]" />
          <Action icon={<FaChartBar className="h-[16px] w-[16px]" />} label="Generate Full Report" style="h-[32px] border-[#29b8d8] text-[#29b8d8] tracking-[-0.1px]" />
          <Action icon={<FaClock className="h-[16px] w-[16px]" />} label="Schedule Updates" style="h-[33px] border-[#957c00] text-[#957c00] tracking-[-0.2px]" />
          <Action icon={<FaDownload className="h-[16px] w-[16px]" />} label="Export Data" style="h-[32px] border-[#a0a6b8] text-[#98a1b5] tracking-[-0.15px]" />
        </div>
      </div>
      <div className="mt-[24px] h-[171px] rounded-[4px] border border-[#a0a6b8] bg-[#1c2333]">
        <CardHeader icon={<FaRobot className="h-[20px] w-[25px]" />} title="Automation Status" spacing="tracking-[0.03px]" />
        <div className="px-[16px] pt-[16px]">
          <div className="flex h-[35px] items-center rounded-[3px] border border-[#a9e3ef] bg-[#d4f1f7] pl-[10px] text-[11.5px] tracking-[-0.1px] text-[#2d5c68]">
            <FaCircleInfo className="mr-[7px] mb-[2px] h-[14px] w-[14px] text-[#104a56]" />
            <span className="mt-[2px]">Automated NDVI updates coming soon!</span>
          </div>
          <div className="grid grid-cols-[193px_193px] justify-between pt-[16px] text-center">
            {['Daily Updates', 'Weekly Reports'].map((t) => (
              <div key={t}>
                <div className="text-[13.5px] leading-[20px] tracking-[-0.15px] text-[#b4babf]">{t}</div>
                <div className="mt-[2px] text-[15.5px] leading-[24px] font-bold tracking-[-0.3px] text-[#98a1b5]">Coming Soon</div>
              </div>
            ))}
          </div>
        </div>
      </div>
    </aside>
  );
}

function Taskbar() {
  return (
    <footer className="flex h-[19px] shrink-0 overflow-hidden border-t border-[#a8b4b8] bg-[linear-gradient(90deg,#d3eeed_0%,#d6edec_12%,#e4e7e6_30%,#d7eaeb_45%,#cfeaec_75%,#dceff0_100%)]">
      <svg className="h-[18px] w-[900px]" viewBox="0 0 900 18">
        <path d="M129 12h11v6h-11zM141 12h11v6h-11z" fill="#1497dc" />
        <rect x="167" y="8.500" width="217" height="34" rx="17" fill="#f0f7f7" stroke="#c8d3d4" />
        <circle cx="183" cy="20" r="5" fill="none" stroke="#333" strokeWidth="1.6" />
        <path d="M343 11l2 5h5l3-5 1 5-4 3h-10l2-3z" fill="#c79b6c" /><path d="M354 18l6-3h6l4 1 6-2-2 4z" fill="#b07c4c" />
        <rect x="403" y="12" width="17" height="8" fill="#f7f7f7" />
        <path d="M442 18q3-6 9-6h5l4 6z" fill="#1768d8" /><path d="M456 12l5 6h-7z" fill="#25b8ed" />
        <path d="M491 18v-5h10v5" fill="none" stroke="#20b0ea" strokeWidth="2" /><rect x="485" y="15" width="22" height="5" fill="#0e62a8" />
        <path d="M529 12h8l3 3h12v5h-23z" fill="#f4c33c" /><path d="M529 12h8l-2 4h-6z" fill="#d59a14" />
        <path d="M574 19l11-8 11 8z" fill="#105fb5" />
        <path d="M618 19q2-8 11-8 9 0 11 8z" fill="#22a8c8" /><path d="M629 11q9 0 11 8h-10z" fill="#4cce7c" />
        <rect x="655" y="4" width="37" height="20" rx="3" fill="#f3f7f7" stroke="#d1dcdd" />
        <path d="M661 19q4-9 14-8v8z" fill="#e23c30" /><circle cx="682" cy="14" r="8" fill="#5b3726" /><path d="M681 8h5v10h-5z" fill="#b87855" /><path d="M677 9h3v10h-3z" fill="#222b31" />
        <path d="M706 18v-3l4-1 2-3h10l2 3 4 1v3z" fill="#ff3d0c" /><rect x="711" y="15" width="12" height="5" rx="2" fill="#fff" />
        <path d="M753 18v-4q0-3 3-3l2 2h6l2-2q3 0 3 3v4z" fill="#7c858a" />
      </svg>
      <span className="ml-auto w-[43px] pt-[7px] font-['Open_Sans',sans-serif] text-[11px] leading-[16px] whitespace-nowrap text-[#444]">9:31 AM</span>
    </footer>
  );
}

export default function App() {
  return (
    <div className="flex h-[876px] w-[1385px] flex-col overflow-hidden bg-[#0e1525] font-['Inter',sans-serif]">
      <BrowserBar />
      <NavBar />
      <main className="flex h-[716px] shrink-0 overflow-hidden bg-[#13171e]">
        <MainPanel />
        <SidePanels />
      </main>
      <div className="h-[9px] shrink-0 border-t border-[#3a2f8f] bg-[#0e1525]" />
      <Taskbar />
    </div>
  );
}
